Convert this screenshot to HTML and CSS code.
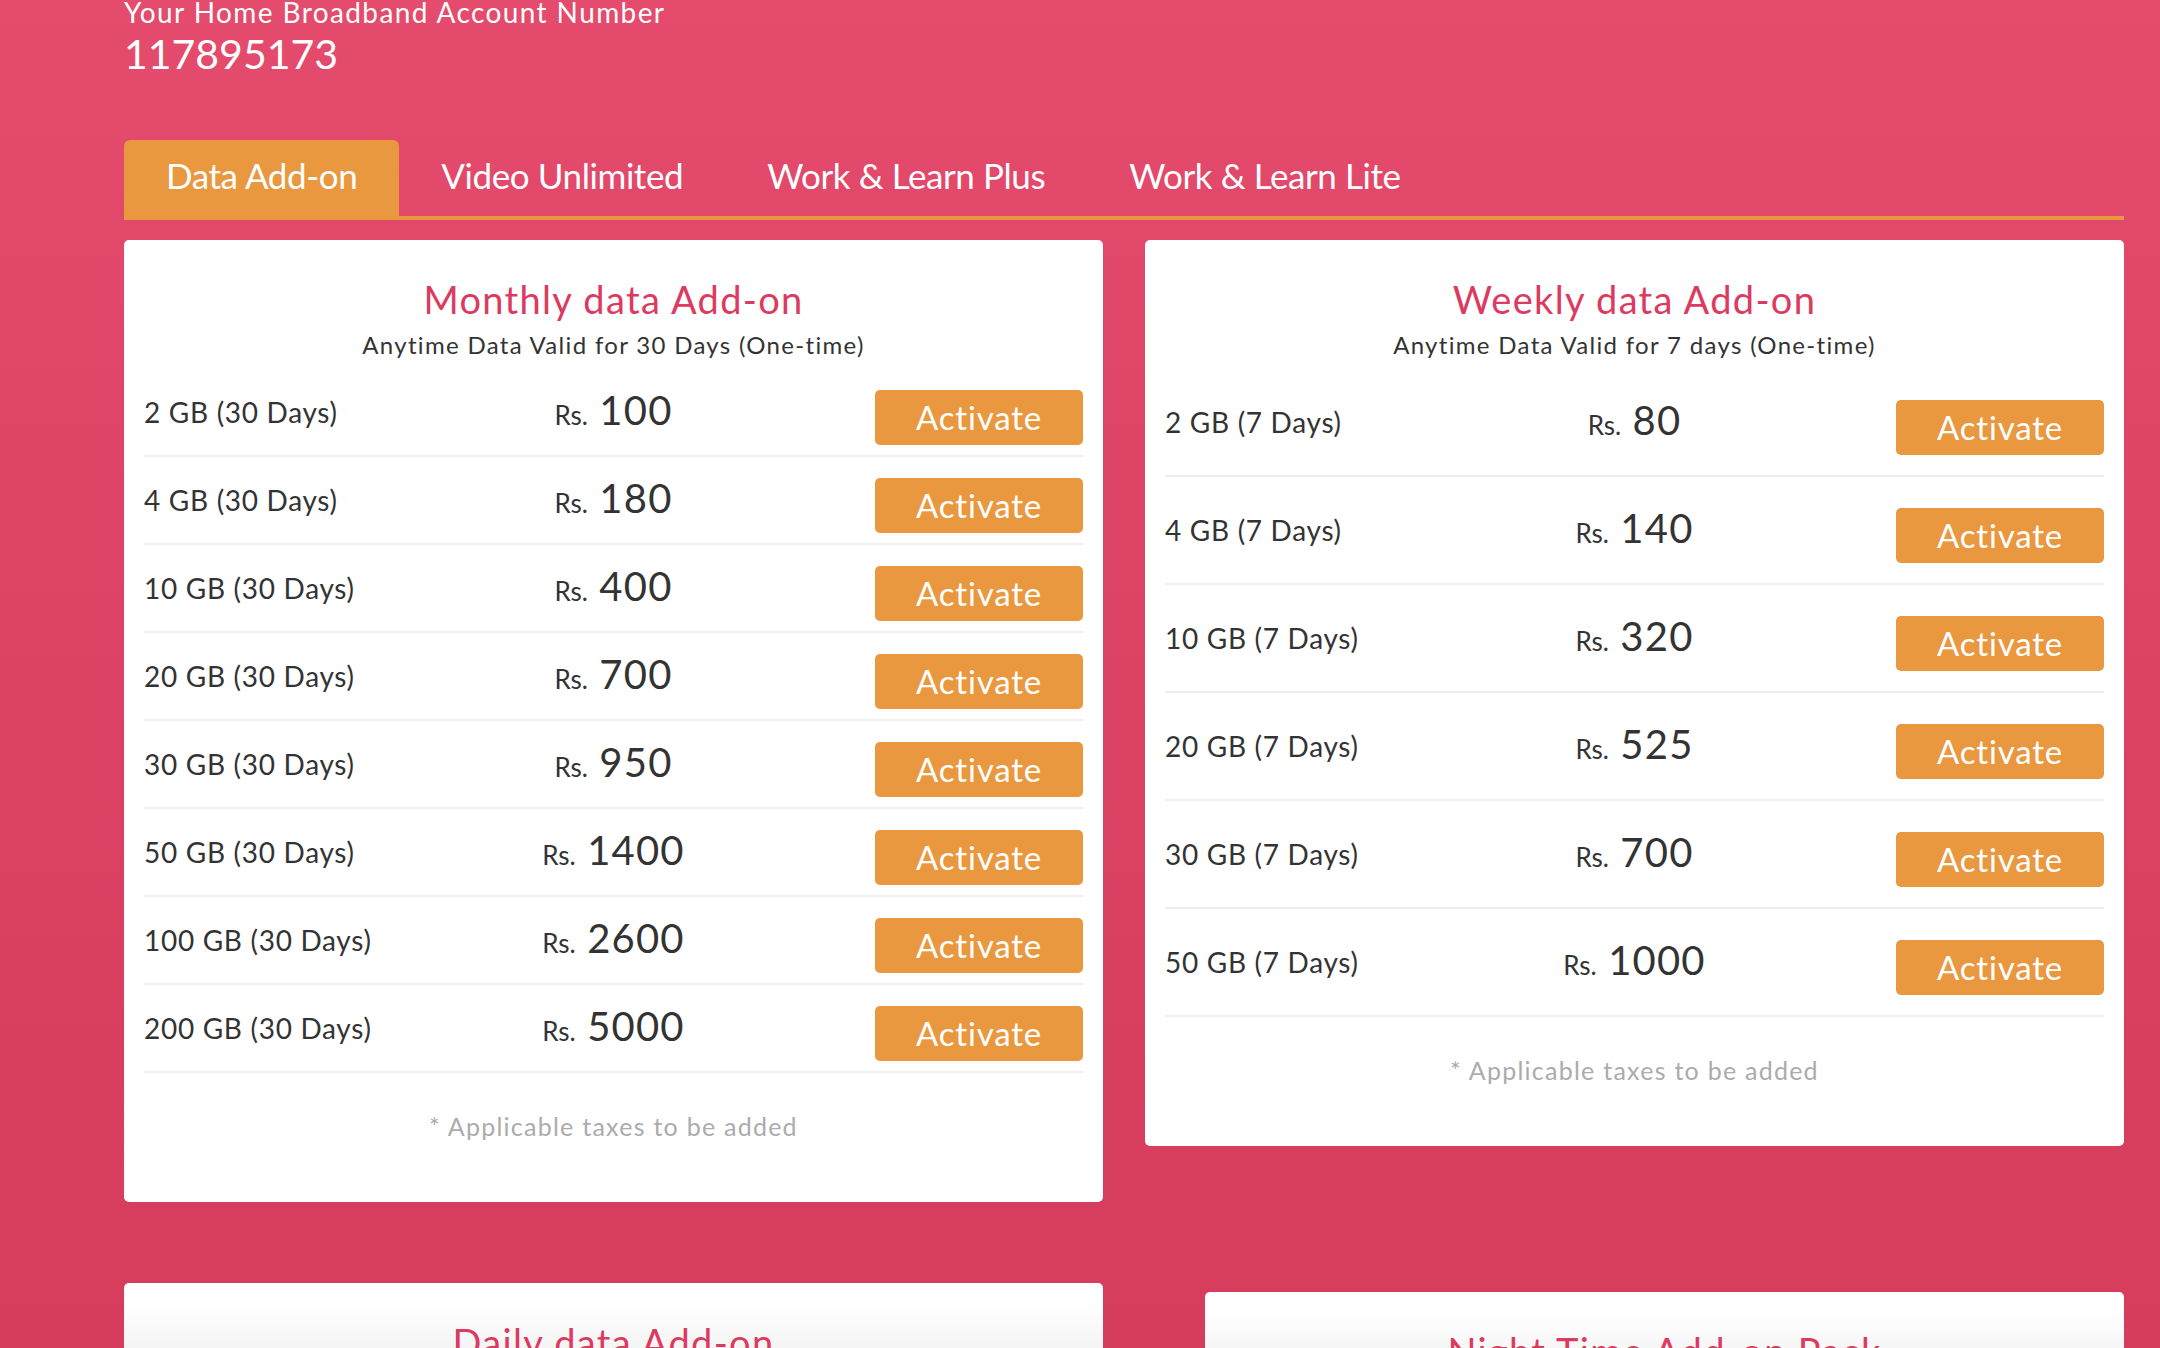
FILE: index.html
```html
<!DOCTYPE html>
<html lang="en">
<head>
<meta charset="utf-8">
<title>Home Broadband Add-ons</title>
<link rel="stylesheet" href="styles.css">
</head>
<body>
<div class="page">
  <div class="account">
    <div class="account-label">Your Home Broadband Account Number</div>
    <div class="account-number">117895173</div>
  </div>

  <nav class="tabs">
    <a class="tab active">Data Add-on</a>
    <a class="tab">Video Unlimited</a>
    <a class="tab">Work &amp; Learn Plus</a>
    <a class="tab">Work &amp; Learn Lite</a>
  </nav>

  <div class="columns">
    <div class="col">
      <section class="card">
        <h2 class="card-title">Monthly data Add-on</h2>
        <p class="card-sub">Anytime Data Valid for 30 Days (One-time)</p>
        <div class="rows">
          <div class="row"><span class="pkg">2 GB (30 Days)</span><span class="price"><small>Rs.</small> 100</span><button class="btn">Activate</button></div>
          <div class="row"><span class="pkg">4 GB (30 Days)</span><span class="price"><small>Rs.</small> 180</span><button class="btn">Activate</button></div>
          <div class="row"><span class="pkg">10 GB (30 Days)</span><span class="price"><small>Rs.</small> 400</span><button class="btn">Activate</button></div>
          <div class="row"><span class="pkg">20 GB (30 Days)</span><span class="price"><small>Rs.</small> 700</span><button class="btn">Activate</button></div>
          <div class="row"><span class="pkg">30 GB (30 Days)</span><span class="price"><small>Rs.</small> 950</span><button class="btn">Activate</button></div>
          <div class="row"><span class="pkg">50 GB (30 Days)</span><span class="price"><small>Rs.</small> 1400</span><button class="btn">Activate</button></div>
          <div class="row"><span class="pkg">100 GB (30 Days)</span><span class="price"><small>Rs.</small> 2600</span><button class="btn">Activate</button></div>
          <div class="row"><span class="pkg">200 GB (30 Days)</span><span class="price"><small>Rs.</small> 5000</span><button class="btn">Activate</button></div>
        </div>
        <p class="note">* Applicable taxes to be added</p>
      </section>

      <section class="card card-soft card-daily">
        <h2 class="card-title">Daily data Add-on</h2>
      </section>
    </div>

    <div class="col">
      <section class="card card-weekly">
        <h2 class="card-title">Weekly data Add-on</h2>
        <p class="card-sub">Anytime Data Valid for 7 days (One-time)</p>
        <div class="rows">
          <div class="row"><span class="pkg">2 GB (7 Days)</span><span class="price"><small>Rs.</small> 80</span><button class="btn">Activate</button></div>
          <div class="row"><span class="pkg">4 GB (7 Days)</span><span class="price"><small>Rs.</small> 140</span><button class="btn">Activate</button></div>
          <div class="row"><span class="pkg">10 GB (7 Days)</span><span class="price"><small>Rs.</small> 320</span><button class="btn">Activate</button></div>
          <div class="row"><span class="pkg">20 GB (7 Days)</span><span class="price"><small>Rs.</small> 525</span><button class="btn">Activate</button></div>
          <div class="row"><span class="pkg">30 GB (7 Days)</span><span class="price"><small>Rs.</small> 700</span><button class="btn">Activate</button></div>
          <div class="row"><span class="pkg">50 GB (7 Days)</span><span class="price"><small>Rs.</small> 1000</span><button class="btn">Activate</button></div>
        </div>
        <p class="note">* Applicable taxes to be added</p>
      </section>

      <section class="card card-soft card-night">
        <h2 class="card-title">Night Time Add-on Pack</h2>
      </section>
    </div>
  </div>
</div>
</body>
</html>
```

FILE: styles.css
```css
* { box-sizing: border-box; }

html, body {
  margin: 0;
  height: 1348px;
  overflow: hidden;
}

body {
  background: linear-gradient(180deg, #e54b6c 0px, #dc4364 600px, #d63c5c 1348px);
  font-family: "Lato", "Open Sans", sans-serif;
  color: #333;
}

.page {
  padding-left: 124px;
  width: 2124px;
}

/* account */
.account-label {
  color: #fff;
  font-size: 28px;
  line-height: 24px;
  letter-spacing: 0.05em;
}
.account-number {
  color: #fff;
  font-size: 41px;
  line-height: 48px;
  margin-top: 6px;
  letter-spacing: 0;
}

/* tabs */
.tabs {
  display: flex;
  margin-top: 62px;
  border-bottom: 4px solid #e9983f;
}
.tab {
  display: block;
  height: 76px;
  padding: 0 42px 6px;
  line-height: 70px;
  font-size: 35px;
  color: #fff;
  border-radius: 6px 6px 0 0;
  letter-spacing: -0.012em;
  cursor: pointer;
}
.tab.active {
  background: #e9983f;
}

/* columns */
.columns {
  display: grid;
  grid-template-columns: 979px 979px;
  column-gap: 42px;
  align-items: start;
  margin-top: 20px;
}
.col {
  display: flex;
  flex-direction: column;
}

/* card */
.card {
  background: #fff;
  border-radius: 5px;
  padding: 36px 20px 61px;
  text-align: center;
}
.card-title {
  margin: 0;
  font-weight: 400;
  font-size: 38px;
  line-height: 46px;
  color: #dc3a60;
  letter-spacing: 0.035em;
}
.card-sub {
  margin: 9px 0 0;
  font-size: 24px;
  line-height: 28px;
  color: #333;
  letter-spacing: 0.055em;
}

.rows {
  margin-top: 10px;
}
.row {
  display: grid;
  grid-template-columns: 1fr auto 1fr;
  align-items: center;
  height: 88px;
  border-bottom: 2px solid #eeeeee;
  text-align: left;
}
.card-weekly .row {
  height: 108px;
}
.pkg {
  font-size: 28px;
  letter-spacing: 0.025em;
  color: #333;
}
.price {
  font-size: 40px;
  color: #333;
  letter-spacing: 0.03em;
  margin-top: -4px;
}
.price small {
  font-size: 26px;
  letter-spacing: 0;
}
.btn {
  justify-self: end;
  width: 208px;
  height: 55px;
  margin-top: 10px;
  border: 0;
  border-radius: 5px;
  background: #e9983f;
  color: #fff;
  font-family: inherit;
  font-size: 33px;
  line-height: 55px;
  padding: 0;
  letter-spacing: 0.025em;
  cursor: pointer;
}

.note {
  margin: 38px 0 0;
  font-size: 25px;
  line-height: 30px;
  color: #ababab;
  letter-spacing: 0.05em;
}

.card-soft {
  background: linear-gradient(180deg, #ffffff 20px, #eeeeee 90px);
  height: 300px;
}
.card-daily {
  margin-top: 81px;
}
.card-night {
  margin-top: 146px;
  margin-left: 60px;
}
```
